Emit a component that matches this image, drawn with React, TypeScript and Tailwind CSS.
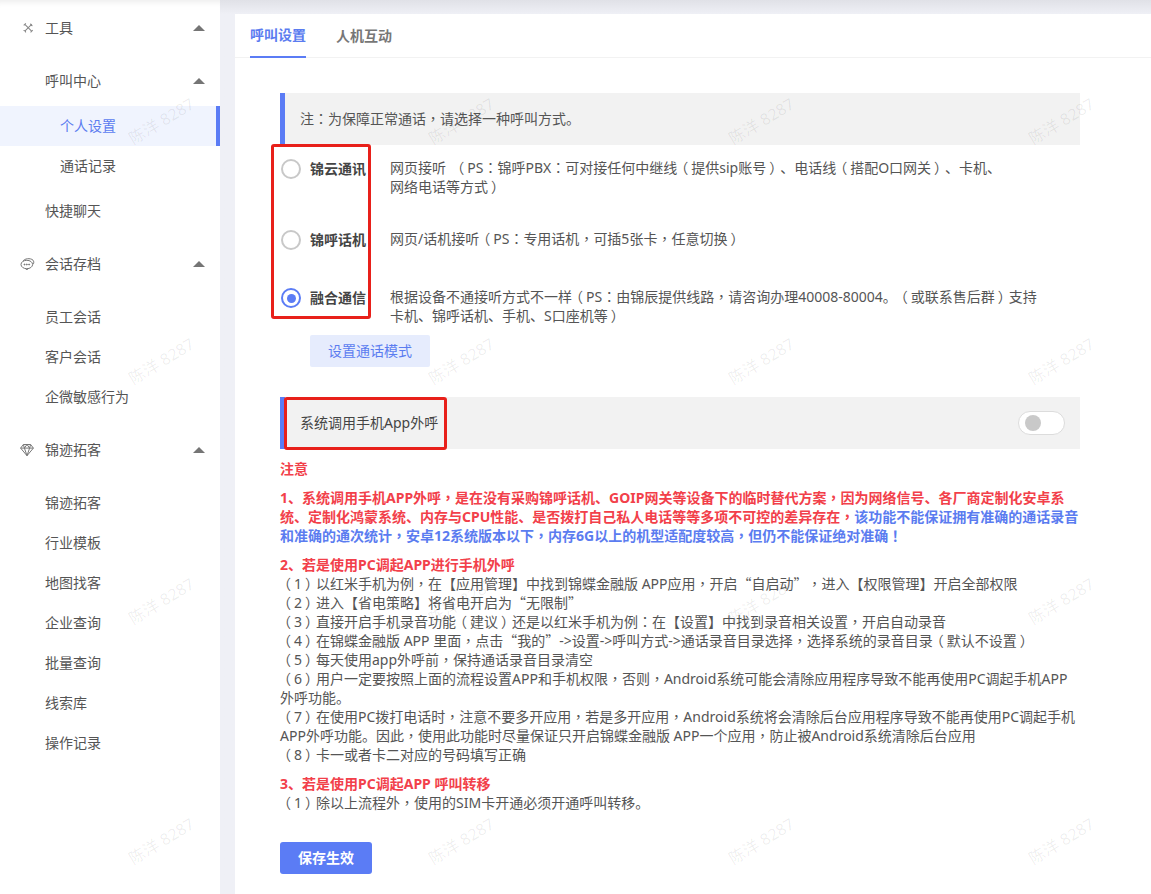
import React from "react";

const FONT = '"Noto Sans","Noto Sans CJK SC",sans-serif';

// The reference's full-width punctuation sits centred in its box; quotes are full width.
function T({ children }: { children: string }) {
  const parts = children.split(/([，：！（）“”])/);
  return (
    <>
      {parts.map((p, i) => {
        if (p === "（") return <span key={i} className="inline-block -translate-x-[3px]">{p}</span>;
        if (p === "）") return <span key={i} className="inline-block translate-x-[3px]">{p}</span>;
        if (p === "，" || p === "：" || p === "！")
          return <span key={i} className="[font-family:'Noto_Sans_CJK_TC',sans-serif]">{p}</span>;
        if (p === "“" || p === "”")
          return <span key={i} className="[font-family:'Noto_Sans_CJK_SC',sans-serif]">{p}</span>;
        return <React.Fragment key={i}>{p}</React.Fragment>;
      })}
    </>
  );
}

function Caret() {
  return (
    <svg width="12" height="6" viewBox="0 0 12 6" className="absolute left-[193px] top-1/2 -mt-[3px]">
      <path d="M6 0 L12 6 L0 6 Z" fill="#757575" />
    </svg>
  );
}

function ToolsIcon() {
  return (
    <svg width="12" height="12" viewBox="0 0 14 14" fill="none" stroke="#888" strokeWidth="1.2" className="ml-[2px]">
      <path d="M3 2.5 L11.5 11 M2 4 L4.5 1.5 M10 12 L12.5 9.5" />
      <path d="M11.5 2.5 L3 11 M10 1.8 a2 2 0 0 0 2.2 2.4 M1.8 10 a2 2 0 0 1 2.4 2.2" />
    </svg>
  );
}

function ChatIcon() {
  return (
    <svg width="15" height="14" viewBox="0 0 15 14" fill="none" stroke="#777" strokeWidth="1">
      <path d="M3 4.2 C4 1.6 10.5 0.6 13 3.2 C14 4.4 14 6 13.2 7.2" />
      <ellipse cx="6.8" cy="7.5" rx="5.8" ry="4.2" />
      <path d="M5.6 11.6 L6.8 13 L8 11.6" />
      <circle cx="4.5" cy="7.5" r="0.5" fill="#777" />
      <circle cx="6.8" cy="7.5" r="0.5" fill="#777" />
      <circle cx="9.1" cy="7.5" r="0.5" fill="#777" />
    </svg>
  );
}

function GemIcon() {
  return (
    <svg width="14" height="13" viewBox="0 0 14 13" fill="none" stroke="#777" strokeWidth="1">
      <path d="M3.4 1 H10.6 L13.4 4.6 L7 12.2 L0.6 4.6 Z" />
      <path d="M0.6 4.6 H13.4 M4.4 4.6 L7 12.2 L9.6 4.6 M3.4 1 L4.4 4.6 L7 1 L9.6 4.6 L10.6 1" />
    </svg>
  );
}

function Head({ icon, label, caret = true, className = "" }: { icon?: React.ReactNode; label: string; caret?: boolean; className?: string }) {
  return (
    <div className={`relative h-[50px] flex items-center pl-[45px] pb-[2px] ${className}`}>
      {icon && <span className="absolute left-[20px] top-1/2 -translate-y-1/2 flex">{icon}</span>}
      <span>{label}</span>
      {caret && <Caret />}
    </div>
  );
}

function Sub({ label }: { label: string }) {
  return <div className="h-10 flex items-center pl-[45px] pb-[2px]">{label}</div>;
}

function Sidebar() {
  return (
    <aside className="w-[220px] shrink-0 bg-white pt-[3px] text-[14px] text-[#555] shadow-[inset_0_8px_6px_-6px_rgba(0,0,0,0.08)]">
      <Head icon={<ToolsIcon />} label="工具" />
      <Head label="呼叫中心" className="mt-[3px]" />
      <div className="h-10 flex items-center pl-[60px] pb-[2px] bg-[#f0f4fe] text-[#5b7cf0] border-r-[4px] border-[#5b7cf5]">个人设置</div>
      <div className="h-10 flex items-center pl-[60px] pb-[2px]">通话记录</div>
      <Head label="快捷聊天" caret={false} />
      <Head icon={<ChatIcon />} label="会话存档" className="mt-[3px]" />
      <div className="pt-2 pb-2">
        <Sub label="员工会话" />
        <Sub label="客户会话" />
        <Sub label="企微敏感行为" />
      </div>
      <Head icon={<GemIcon />} label="锦迹拓客" />
      <div className="pt-2">
        <Sub label="锦迹拓客" />
        <Sub label="行业模板" />
        <Sub label="地图找客" />
        <Sub label="企业查询" />
        <Sub label="批量查询" />
        <Sub label="线索库" />
        <Sub label="操作记录" />
      </div>
    </aside>
  );
}

function Radio({ checked = false }: { checked?: boolean }) {
  return (
    <span className={`w-5 h-5 rounded-full border-2 bg-white flex items-center justify-center shrink-0 ${checked ? "border-[#5b7cf5]" : "border-[#c8c8c8]"}`}>
      {checked && <span className="w-[9px] h-[9px] rounded-full bg-[#5b7cf5]" />}
    </span>
  );
}

function Option({ label, checked, lines, className = "" }: { label: string; checked?: boolean; lines: string[]; className?: string }) {
  return (
    <div className={`flex items-start ${className}`}>
      <div className="w-[110px] pl-[1px] flex items-center gap-[9px] h-[20px] shrink-0">
        <Radio checked={checked} />
        <span className="font-bold text-[#444] whitespace-nowrap pb-[2px]">{label}</span>
      </div>
      <div className="leading-[19px] text-[#555] whitespace-nowrap -mt-[1px]">
        {lines.map((l) => (
          <div key={l}><T>{l}</T></div>
        ))}
      </div>
    </div>
  );
}

const R = "text-[#f2404a] font-bold";
const B = "text-[#5b7cf0] font-bold";

function Watermarks() {
  const cells = Array.from({ length: 16 });
  return (
    <div className="absolute inset-0 pl-[11px] pt-[1px] grid grid-cols-[repeat(4,300px)] grid-rows-[repeat(4,240px)] pointer-events-none overflow-hidden">
      {cells.map((_, i) => (
        <div key={i} className="flex items-center justify-center">
          <span className="-rotate-[31deg] text-[16px] text-black/[0.07] whitespace-nowrap">陈洋 8287</span>
        </div>
      ))}
    </div>
  );
}

export default function App() {
  return (
    <div className="relative w-[1151px] h-[894px] overflow-hidden flex bg-[#ecedf4] text-[14px] [text-spacing-trim:space-all]" style={{ fontFamily: FONT }}>
      <Sidebar />
      <main className="flex-1 min-w-0 pl-[15px] pt-[14px] bg-gradient-to-b from-[#e0e1e7] to-[#eff0f6] to-[14px]">
        <div className="h-[880px] bg-white">
          <div className="h-[44px] border-b border-[#f2f2f2] flex pl-[15px] gap-[30px]">
            <div className="h-[44px] flex items-center pb-[2px] w-[56px] border-b-2 border-[#5b7cf5] text-[#5b7cf0] font-bold whitespace-nowrap">呼叫设置</div>
            <div className="h-[44px] flex items-center pb-[2px] text-[#777] font-bold whitespace-nowrap">人机互动</div>
          </div>
          <div className="pl-[45px] w-[845px] pt-[35px]">
            <div className="h-[52px] bg-[#f2f2f2] border-l-[5px] border-[#5b7cf5] flex items-center pl-[15px] pb-[2px] text-[#555]"><span><T>注：为保障正常通话，请选择一种呼叫方式。</T></span></div>
            <div className="relative">
              <div className="absolute -left-[9px] -top-[1px] w-[100px] h-[175px] border-[3px] border-[#e8201a] rounded-[3px]" />
              <div className="pt-[14px]">
                <Option label="锦云通讯" lines={["网页接听 \u00a0（PS：锦呼PBX：可对接任何中继线（提供sip账号）、电话线（搭配O口网关）、卡机、", "网络电话等方式）"]} />
                <Option label="锦呼话机" className="mt-[34px]" lines={["网页/话机接听（PS：专用话机，可插5张卡，任意切换）"]} />
                <Option label="融合通信" checked className="mt-[38px]" lines={["根据设备不通接听方式不一样（PS：由锦辰提供线路，请咨询办理40008-80004。（或联系售后群）支持", "卡机、锦呼话机、手机、S口座机等）"]} />
              </div>
            </div>
            <button className="ml-[30px] mt-[10px] w-[120px] h-[32px] pb-[2px] bg-[#e6ecfd] text-[#5b7cf0] rounded-[2px] block">设置通话模式</button>
            <div className="relative mt-[30px] h-[52px] bg-[#f2f2f2] border-l-[5px] border-[#5b7cf5] flex items-center justify-between pl-[15px] pr-[15px] text-[#444]">
              <span className="pb-[2px]">系统调用手机App外呼</span>
              <div className="absolute -left-[1px] top-0 w-[163px] h-[53px] border-[3px] border-[#e8201a] rounded-[3px]" />
              <span className="w-[47px] h-[24px] rounded-full bg-white border border-[#dcdcdc] flex items-center pl-[6px]">
                <span className="w-4 h-4 rounded-full bg-[#c9c9c9]" />
              </span>
            </div>
            <div className="leading-[19px] mt-[10px] text-[#555] whitespace-nowrap">
              <div className={R}>注意</div>
              <div className={`mt-[10px] ${R}`}>
                <div><T>1、系统调用手机APP外呼，是在没有采购锦呼话机、GOIP网关等设备下的临时替代方案，因为网络信号、各厂商定制化安卓系</T></div>
                <div><T>统、定制化鸿蒙系统、内存与CPU性能、是否拨打自己私人电话等等多项不可控的差异存在，</T><span className={B}>该功能不能保证拥有准确的通话录音</span></div>
                <div><span className={B}><T>和准确的通次统计，安卓12系统版本以下，内存6G以上的机型适配度较高，但仍不能保证绝对准确！</T></span></div>
              </div>
              <div className={`mt-[10px] ${R}`}>2、若是使用PC调起APP进行手机外呼</div>
              <div><T>（1）以红米手机为例，在【应用管理】中找到锦蝶金融版 APP应用，开启“自启动”，进入【权限管理】开启全部权限</T></div>
              <div><T>（2）进入【省电策略】将省电开启为“无限制”</T></div>
              <div><T>（3）直接开启手机录音功能（建议）还是以红米手机为例：在【设置】中找到录音相关设置，开启自动录音</T></div>
              <div><T>（4）在锦蝶金融版 APP 里面，点击“我的”-&gt;设置-&gt;呼叫方式-&gt;通话录音目录选择，选择系统的录音目录（默认不设置）</T></div>
              <div><T>（5）每天使用app外呼前，保持通话录音目录清空</T></div>
              <div><T>（6）用户一定要按照上面的流程设置APP和手机权限，否则，Android系统可能会清除应用程序导致不能再使用PC调起手机APP</T></div>
              <div>外呼功能。</div>
              <div><T>（7）在使用PC拨打电话时，注意不要多开应用，若是多开应用，Android系统将会清除后台应用程序导致不能再使用PC调起手机</T></div>
              <div><T>APP外呼功能。因此，使用此功能时尽量保证只开启锦蝶金融版 APP一个应用，防止被Android系统清除后台应用</T></div>
              <div><T>（8）卡一或者卡二对应的号码填写正确</T></div>
              <div className={`mt-[10px] ${R}`}>3、若是使用PC调起APP 呼叫转移</div>
              <div><T>（1）除以上流程外，使用的SIM卡开通必须开通呼叫转移。</T></div>
            </div>
            <button className="mt-[30px] w-[92px] h-[32px] pb-[2px] bg-[#5b7cf5] text-white font-bold rounded-[3px] block">保存生效</button>
          </div>
        </div>
      </main>
      <Watermarks />
    </div>
  );
}
